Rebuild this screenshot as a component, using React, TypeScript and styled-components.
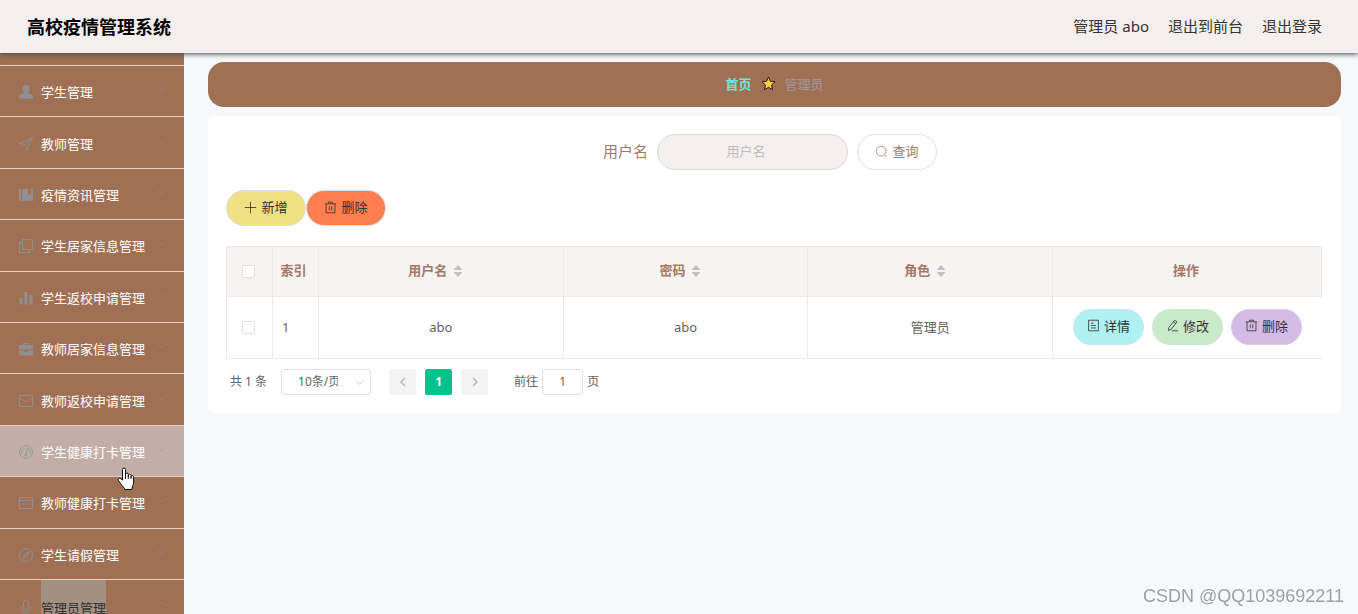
import React from 'react';
import styled, { createGlobalStyle, css } from 'styled-components';

const GlobalStyle = createGlobalStyle`
  * { box-sizing: border-box; }
  body {
    margin: 0;
    background: #f7f8fa;
    color: #606266;
    font-family: 'Noto Sans', 'Noto Sans CJK SC', sans-serif;
    font-size: 13px;
    line-height: 20px;
  }
  button, input, select { font: inherit; color: inherit; }
  button { cursor: pointer; }
`;

const Page = styled.div`
  display: flex;
  flex-direction: column;
  height: 100vh;
  overflow: hidden;
`;

const TopBar = styled.header`
  position: relative;
  z-index: 2;
  display: flex;
  flex-shrink: 0;
  align-items: center;
  justify-content: space-between;
  height: 53px;
  padding: 0 36px 0 27px;
  background: #f4eeee;
  box-shadow: 0 1px 5px #444;
`;

const Title = styled.h1`
  margin: 0;
  color: #000;
  font-size: 18px;
  line-height: 24px;
  font-weight: 700;
`;

const Account = styled.div`
  display: flex;
  gap: 19px;
  padding-bottom: 2px;
  color: #333;
  font-size: 15px;
`;

const AccountLink = styled.a`
  color: inherit;
  text-decoration: none;
`;

const Body = styled.div`
  display: flex;
  flex: 1;
  min-height: 0;
`;

const Sidebar = styled.nav`
  flex: 0 0 184px;
  overflow: hidden;
  background: #9f7054;
`;

const ScrolledItem = styled.div`
  height: 13px;
  border-bottom: 1px solid #e6cfc4;
`;

const Menu = styled.ul`
  display: grid;
  grid-template-rows: repeat(10, 1fr);
  min-height: 514px;
  margin: 0;
  padding: 0;
  list-style: none;
`;

const MenuItem = styled.li<{ $hovered?: boolean }>`
  position: relative;
  display: flex;
  border-bottom: 1px solid #e6cfc4;
  background: ${p => (p.$hovered ? '#c2aea7' : 'transparent')};
`;

const MenuButton = styled.button<{ $open?: boolean }>`
  display: flex;
  align-items: center;
  gap: 7px;
  width: 100%;
  min-height: 50px;
  padding: ${p => (p.$open ? 0 : 2)}px 16px 0 18px;
  border: 0;
  background: none;
  color: ${p => (p.$open ? '#303133' : '#fff')};
  text-align: left;
  white-space: nowrap;
`;

const MenuIcon = styled.svg`
  flex: none;
  width: 16px;
  height: 16px;
  color: #909399;
  opacity: 0.85;
`;

const MenuText = styled.span<{ $selected?: boolean }>`
  ${p => p.$selected && css`
    padding-top: 2px;
    line-height: 52px;
    background: #a39081;
  `}
`;

const Arrow = styled.svg`
  width: 12px;
  height: 12px;
  margin: 0 0 6px auto;
  color: #909399;
  opacity: 0.5;
`;

const Pointer = styled.svg`
  position: absolute;
  z-index: 1;
  left: 117px;
  top: 41px;
  width: 18px;
  height: 24px;
  pointer-events: none;
`;

const Main = styled.main`
  flex: 1;
  min-width: 0;
  padding: 9px 17px 24px 24px;
`;

const Breadcrumb = styled.nav`
  display: flex;
  align-items: center;
  justify-content: center;
  gap: 9px;
  height: 45px;
  margin-bottom: 9px;
  padding-bottom: 2px;
  border-radius: 16px;
  background: #9f7054;
  color: #a397a0;
`;

const HomeLink = styled.a`
  color: #6be8d8;
  font-weight: 700;
  text-decoration: none;
`;

const Card = styled.section`
  padding: 18px 19px 18px 18px;
  border-radius: 5px;
  background: #fff;
`;

const SearchForm = styled.form`
  display: flex;
  align-items: center;
  justify-content: center;
  gap: 9px;
  padding-right: 8px;
  margin-bottom: 20px;
`;

const SearchLabel = styled.label`
  padding-bottom: 2px;
  color: #a67864;
  font-size: 15px;
`;

const SearchInput = styled.input`
  width: 191px;
  height: 36px;
  padding: 0 29px 2px 16px;
  border: 1px solid #ddd8d8;
  border-radius: 18px;
  background: #f4eeee;
  text-align: center;
  &::placeholder { color: #c0bcbf; opacity: 1; }
`;

const PillButton = styled.button<{ $bg: string; $edge: string; $wide?: boolean }>`
  display: inline-flex;
  align-items: center;
  justify-content: center;
  gap: 4px;
  width: ${p => (p.$wide ? 80 : 71)}px;
  height: 36px;
  padding: 0 0 2px;
  border: 1px solid ${p => p.$edge};
  border-radius: 18px;
  background: ${p => p.$bg};
  color: #333;
  white-space: nowrap;
`;

const QueryButton = styled(PillButton)`
  color: #a67864;
`;

const ButtonIcon = styled.svg`
  width: 13px;
  height: 13px;
`;

const Toolbar = styled.div`
  display: flex;
  margin-bottom: 20px;
`;

const DataTable = styled.table`
  width: 100%;
  table-layout: fixed;
  border-collapse: separate;
  border-spacing: 0;
  border: 1px solid #ebe8ea;
  border-width: 1px 0 0 1px;
`;

const HeadCell = styled.th<{ $narrow?: boolean }>`
  height: 50px;
  padding: 0 ${p => (p.$narrow ? 4 : 10)}px 3px ${p => (p.$narrow ? 0 : 8)}px;
  border: 1px solid #efe9ea;
  border-width: 0 1px 1px 0;
  background: #f7f3f3;
  color: #a67864;
  font-weight: 700;
  text-align: center;
`;

const Cell = styled.td<{ $left?: boolean }>`
  height: 62px;
  padding: 0 0 2px ${p => (p.$left ? 9 : 0)}px;
  border: 1px solid #ebebee;
  border-width: 0 1px 1px 0;
  text-align: ${p => (p.$left ? 'left' : 'center')};
  &:last-child { border-right: 0; }
`;

const CheckBox = styled.input`
  appearance: none;
  display: block;
  width: 13px;
  height: 13px;
  margin: 2px 0 0 15px;
  border: 1px solid #dcdfe6;
  border-radius: 2px;
  background: #fff;
`;

const SortIcon = styled.svg`
  width: 10px;
  height: 12px;
  margin: 0 8px 0 6px;
  vertical-align: -2px;
  color: #c4bec3;
`;

const RowActions = styled.div`
  display: flex;
  justify-content: center;
  gap: 8px;
`;

const Pager = styled.div`
  display: flex;
  align-items: center;
  padding: 10px 4px 0;
  font-size: 12px;
`;

const SelectBox = styled.div`
  position: relative;
  margin: 0 18px 0 14px;
`;

const SizeSelect = styled.select`
  appearance: none;
  display: block;
  width: 90px;
  height: 26px;
  padding: 0 32px 0 16px;
  border: 1px solid #dcdfe6;
  border-radius: 3px;
  background: #fff;
  line-height: 20px;
`;

const SelectArrow = styled.svg`
  position: absolute;
  right: 6px;
  top: 8px;
  width: 11px;
  height: 11px;
  color: #c0c4cc;
  pointer-events: none;
`;

const PageButton = styled.button<{ $current?: boolean }>`
  display: grid;
  place-items: center;
  width: 27px;
  height: 26px;
  margin-right: 9px;
  padding: 0;
  border: 0;
  border-radius: 2px;
  background: ${p => (p.$current ? '#04c28e' : '#f4f4f5')};
  color: ${p => (p.$current ? '#fff' : '#b4b8c0')};
  font-weight: 700;
`;

const JumpLabel = styled.label`
  display: flex;
  align-items: center;
  gap: 4px;
  margin-left: 17px;
`;

const JumpInput = styled.input`
  width: 41px;
  height: 26px;
  padding: 0 0 1px;
  border: 1px solid #dcdfe6;
  border-radius: 3px;
  background: #fff;
  text-align: center;
`;

const Watermark = styled.div`
  position: fixed;
  right: 14px;
  bottom: 8px;
  color: #9b9da1;
  font-family: 'Liberation Sans', sans-serif;
  font-size: 18px;
  text-shadow: 0 -1px #fff;
`;

const line = { fill: 'none', stroke: 'currentColor', strokeWidth: 1 } as const;

const icons: Record<string, React.ReactNode> = {
  user: <path fill="currentColor" d="M8 1a3.600 3.600 0 0 1 3.600 3.700C11.600 6.300 10.800 7.700 9.900 8.500L15 11.500V14.500H1V11.500L6.100 8.500C5.200 7.700 4.400 6.300 4.400 4.700A3.600 3.600 0 0 1 8 1Z" />,
  position: <path {...line} d="M14.500 1.500 1.500 7.500 7.500 8.500 9 14.500ZM7.500 8.500 14 2" />,
  notebook: <path fill="currentColor" d="M1 2h2v12H1zM4 2h6v6l1.500-1.500L13 8V2h2v12H4z" />,
  copy: <path {...line} d="M4.500 1.500h10v10h-10zM1.500 4v10.500H12M2 4.500h2.500M11.500 12v2.500" />,
  data: <path fill="currentColor" d="M1.500 8h3v6.500h-3zM6.500 2h3v12.500h-3zM11.500 5h3v9.500h-3z" />,
  suitcase: <path fill="currentColor" d="M5 2h6v2h4v4.500H1V4h4zM6.200 3v1h3.600V3zM1 9.500h5.500V11h3V9.500H15v5H1z" />,
  message: <path {...line} d="M1.500 2.500h13v11h-13zM1.500 4.500 8 9l6.500-4.500" />,
  odometer: <g {...line}><circle cx="8" cy="8" r="6.500" /><path d="M4 9.500a4.300 4.300 0 0 1 2-5M9.500 4a4.300 4.300 0 0 1 2.500 5.500M9.500 4 8 10" /><circle cx="7.700" cy="11" r="1.200" /></g>,
  card: <path {...line} d="M1.500 2.500h13v11h-13zM1.500 5.500h13M4 9h4M10 9h2" />,
  compass: <g {...line}><circle cx="8" cy="8" r="6.500" /><path d="m11 4.500-2 4.500-4 2.500 2-4.500Z" /></g>,
  mic: <path {...line} d="M5.500 4a2.500 2.500 0 0 1 5 0v4a2.500 2.500 0 0 1-5 0ZM3 7v1a5 5 0 0 0 10 0V7M8 13v2M5 15h6" />,
  search: <g {...line}><circle cx="7.500" cy="7.500" r="6" /><path d="m12 12 2.500 2.500" /></g>,
  plus: <path {...line} d="M8 1v14M1 8h14" />,
  trash: <path {...line} d="M1 3.500h14M5.500 3.500v-2h5v2M2.500 3.500v11h11v-11M6.500 6.500v5M9.500 6.500v5" />,
  detail: <path {...line} d="M2 1.500h12v13H2zM5 5h3M5 8h6M5 11h6" />,
  edit: <path {...line} d="M10.500 1.500 13.500 3.500 6.500 12.500 3 14 3.500 10.500ZM9 3.500l3 2M7 14.500h8" />,
};

const Glyph = ({ name }: { name: string }) => (
  <ButtonIcon viewBox="0 0 16 16" aria-hidden="true">{icons[name]}</ButtonIcon>
);

const menu = [
  ['user', '学生管理'],
  ['position', '教师管理'],
  ['notebook', '疫情资讯管理'],
  ['copy', '学生居家信息管理'],
  ['data', '学生返校申请管理'],
  ['suitcase', '教师居家信息管理'],
  ['message', '教师返校申请管理'],
  ['odometer', '学生健康打卡管理'],
  ['card', '教师健康打卡管理'],
  ['compass', '学生请假管理'],
];

const MenuRow = ({ icon, label, open }: { icon: string; label: string; open?: boolean }) => (
  <MenuButton type="button" $open={open} aria-expanded={!!open}>
    <MenuIcon viewBox="0 0 16 16" aria-hidden="true">{icons[icon]}</MenuIcon>
    <MenuText $selected={open}>{label}</MenuText>
    <Arrow viewBox="0 0 12 12" aria-hidden="true">
      <path {...line} d={open ? 'm2 8 4-4 4 4' : 'm2 4 4 4 4-4'} />
    </Arrow>
  </MenuButton>
);

const Sort = () => (
  <SortIcon viewBox="0 0 10 12" aria-hidden="true">
    <path fill="currentColor" d="M5 0 9.500 5h-9zM5 12 .5 7h9z" />
  </SortIcon>
);

export default function App() {
  return (
    <Page>
      <GlobalStyle />
      <TopBar>
        <Title>高校疫情管理系统</Title>
        <Account>
          <span>管理员 abo</span>
          <AccountLink href="#front">退出到前台</AccountLink>
          <AccountLink href="#logout">退出登录</AccountLink>
        </Account>
      </TopBar>
      <Body>
        <Sidebar>
          <ScrolledItem />
          <Menu>
            {menu.map(([icon, label]) => (
              <MenuItem key={label} $hovered={icon === 'odometer'}>
                <MenuRow icon={icon} label={label} />
                {icon === 'odometer' && (
                  <Pointer viewBox="0 0 18 24" aria-hidden="true">
                    <path
                      fill="#fff"
                      stroke="#111"
                      d="M5.500 13V2.500a1.500 1.500 0 0 1 3 0V9V7.500a1.400 1.400 0 0 1 2.800 0V9.500V8.300a1.400 1.400 0 0 1 2.700 0V10.500V9.500a1.300 1.300 0 0 1 2.500 0V16c0 2-1.500 3.500-1.500 5.500v1H7.500v-1C6 19.500 3 16 1.500 13.500c-1-1.700 1-3 2.300-1.700Z"
                    />
                    <path stroke="#111" d="M8.500 8.500V12M11.300 9v3M14 10v2" />
                  </Pointer>
                )}
              </MenuItem>
            ))}
          </Menu>
          <MenuRow icon="mic" label="管理员管理" open />
        </Sidebar>
        <Main>
          <Breadcrumb aria-label="breadcrumb">
            <HomeLink href="#home">首页</HomeLink>
            <svg width="15" height="15" viewBox="0 0 15 15" aria-hidden="true">
              <path fill="#fbd043" stroke="#2c1608" d="m7.500 1 1.900 4.300 4.600.5-3.400 3.200.9 4.700-4-2.400-4 2.400.9-4.700L1 5.800l4.600-.5Z" />
            </svg>
            <span>管理员</span>
          </Breadcrumb>
          <Card>
            <SearchForm onSubmit={e => e.preventDefault()}>
              <SearchLabel htmlFor="username">用户名</SearchLabel>
              <SearchInput id="username" placeholder="用户名" />
              <QueryButton type="submit" $wide $bg="#fff" $edge="#dcdfe6"><Glyph name="search" />查询</QueryButton>
            </SearchForm>
            <Toolbar>
              <PillButton type="button" $wide $bg="#f0e084" $edge="#dcdfe6"><Glyph name="plus" />新增</PillButton>
              <PillButton type="button" $wide $bg="#ff7f50" $edge="#dcdfe6"><Glyph name="trash" />删除</PillButton>
            </Toolbar>
            <DataTable>
              <colgroup>
                <col width="46" />
                <col width="46" />
                <col />
                <col />
                <col />
                <col width="269" />
              </colgroup>
              <thead>
                <tr>
                  <HeadCell $narrow><CheckBox type="checkbox" aria-label="全选" /></HeadCell>
                  <HeadCell $narrow>索引</HeadCell>
                  <HeadCell>用户名<Sort /></HeadCell>
                  <HeadCell>密码<Sort /></HeadCell>
                  <HeadCell>角色<Sort /></HeadCell>
                  <HeadCell>操作</HeadCell>
                </tr>
              </thead>
              <tbody>
                <tr>
                  <Cell><CheckBox type="checkbox" aria-label="选择" /></Cell>
                  <Cell $left>1</Cell>
                  <Cell>abo</Cell>
                  <Cell>abo</Cell>
                  <Cell>管理员</Cell>
                  <Cell>
                    <RowActions>
                      <PillButton type="button" $bg="#aff0f2" $edge="#c8e6ea"><Glyph name="detail" />详情</PillButton>
                      <PillButton type="button" $bg="#c9eac9" $edge="#d0e4d4"><Glyph name="edit" />修改</PillButton>
                      <PillButton type="button" $bg="#d3bbe6" $edge="#d8cce6"><Glyph name="trash" />删除</PillButton>
                    </RowActions>
                  </Cell>
                </tr>
              </tbody>
            </DataTable>
            <Pager>
              <span>共 1 条</span>
              <SelectBox>
                <SizeSelect aria-label="每页条数" defaultValue="10">
                  <option value="10">10条/页</option>
                </SizeSelect>
                <SelectArrow viewBox="0 0 12 12" aria-hidden="true"><path {...line} d="m2 4 4 4 4-4" /></SelectArrow>
              </SelectBox>
              <PageButton type="button" aria-label="上一页">
                <svg width="12" height="12" viewBox="0 0 12 12"><path fill="none" stroke="currentColor" strokeWidth="1.500" d="M8 2 4 6l4 4" /></svg>
              </PageButton>
              <PageButton type="button" $current>1</PageButton>
              <PageButton type="button" aria-label="下一页">
                <svg width="12" height="12" viewBox="0 0 12 12"><path fill="none" stroke="currentColor" strokeWidth="1.500" d="m4 2 4 4-4 4" /></svg>
              </PageButton>
              <JumpLabel>前往<JumpInput defaultValue="1" />页</JumpLabel>
            </Pager>
          </Card>
        </Main>
      </Body>
      <Watermark>CSDN @QQ1039692211</Watermark>
    </Page>
  );
}
